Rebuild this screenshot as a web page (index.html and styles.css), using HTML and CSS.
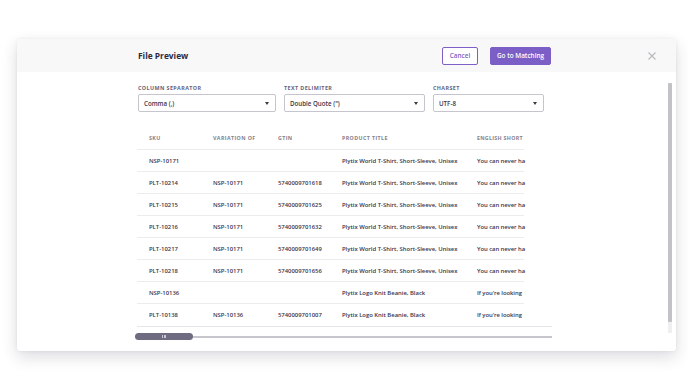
FILE: index.html
```html
<!DOCTYPE html>
<html>
<head>
<meta charset="utf-8">
<link rel="stylesheet" href="styles.css">
</head>
<body>
<div class="modal">
  <div class="modal-head">
    <h1 class="title">File Preview</h1>
    <div class="actions">
      <button class="btn btn-outline">Cancel</button>
      <button class="btn btn-primary">Go to Matching</button>
    </div>
    <svg class="close" width="8" height="8" viewBox="0 0 8 8"><path d="M0.5 0.5L7.5 7.5M7.5 0.5L0.5 7.5" stroke="#b9b9bf" stroke-width="1.1"/></svg>
  </div>
  <div class="modal-body">
    <div class="content">
      <div class="fields">
        <div class="field f1">
          <div class="label">Column Separator</div>
          <div class="select"><span>Comma (,)</span><i class="caret"></i></div>
        </div>
        <div class="field f2">
          <div class="label">Text Delimiter</div>
          <div class="select"><span>Double Quote (")</span><i class="caret"></i></div>
        </div>
        <div class="field f3">
          <div class="label">Charset</div>
          <div class="select"><span>UTF-8</span><i class="caret"></i></div>
        </div>
      </div>
      <div class="table-wrap">
        <div class="table">
          <div class="row head">
            <div class="c c1">SKU</div><div class="c c2">Variation of</div><div class="c c3">GTIN</div><div class="c c4">Product Title</div><div class="c c5">English Short</div>
          </div>
          <div class="row"><div class="c c1">NSP-10171</div><div class="c c2"></div><div class="c c3"></div><div class="c c4">Plytix World T-Shirt, Short-Sleeve, Unisex</div><div class="c c5">You can never ha</div></div>
          <div class="row"><div class="c c1">PLT-10214</div><div class="c c2">NSP-10171</div><div class="c c3">5740009701618</div><div class="c c4">Plytix World T-Shirt, Short-Sleeve, Unisex</div><div class="c c5">You can never ha</div></div>
          <div class="row"><div class="c c1">PLT-10215</div><div class="c c2">NSP-10171</div><div class="c c3">5740009701625</div><div class="c c4">Plytix World T-Shirt, Short-Sleeve, Unisex</div><div class="c c5">You can never ha</div></div>
          <div class="row"><div class="c c1">PLT-10216</div><div class="c c2">NSP-10171</div><div class="c c3">5740009701632</div><div class="c c4">Plytix World T-Shirt, Short-Sleeve, Unisex</div><div class="c c5">You can never ha</div></div>
          <div class="row"><div class="c c1">PLT-10217</div><div class="c c2">NSP-10171</div><div class="c c3">5740009701649</div><div class="c c4">Plytix World T-Shirt, Short-Sleeve, Unisex</div><div class="c c5">You can never ha</div></div>
          <div class="row"><div class="c c1">PLT-10218</div><div class="c c2">NSP-10171</div><div class="c c3">5740009701656</div><div class="c c4">Plytix World T-Shirt, Short-Sleeve, Unisex</div><div class="c c5">You can never ha</div></div>
          <div class="row"><div class="c c1">NSP-10136</div><div class="c c2"></div><div class="c c3"></div><div class="c c4">Plytix Logo Knit Beanie, Black</div><div class="c c5">If you're looking</div></div>
          <div class="row"><div class="c c1">PLT-10138</div><div class="c c2">NSP-10136</div><div class="c c3">5740009701007</div><div class="c c4">Plytix Logo Knit Beanie, Black</div><div class="c c5">If you're looking</div></div>
        </div>
      </div>
      <div class="hscroll">
        <div class="hthumb"><span class="grip"></span><span class="grip"></span><span class="grip"></span></div>
        <div class="htrack"></div>
      </div>
    </div>
    <div class="vscroll"><div class="vthumb"></div></div>
  </div>
</div>
</body>
</html>
```

FILE: styles.css
```css
* { box-sizing: border-box; }
html, body { margin: 0; padding: 0; background: #fff; }
body {
  font-family: "Open Sans", "Liberation Sans", sans-serif;
  color: #38344d;
  width: 688px;
  height: 387px;
  overflow: hidden;
}
.modal {
  margin: 39px 0 0 17px;
  width: 659px;
  height: 312px;
  background: #fff;
  border-radius: 3px;
  box-shadow: 0 6px 16px rgba(40, 36, 60, 0.16), 0 0 4px rgba(40, 36, 60, 0.06);
  display: flex;
  flex-direction: column;
  overflow: hidden;
}
.modal-head {
  height: 33px;
  flex: none;
  background: #f8f8f9;
  display: flex;
  align-items: center;
  padding-left: 121px;
  position: relative;
}
.title {
  margin: 0;
  font-size: 8.4px;
  font-weight: 700;
  color: #2c2940;
  flex: 1;
  transform: scaleY(1.12);
}
.actions {
  display: flex;
  gap: 12px;
  margin-right: 125px;
}
.btn {
  height: 18px;
  font-family: inherit;
  font-size: 6.4px;
  font-weight: 600;
  border-radius: 2px;
  padding: 0;
  cursor: pointer;
}
.btn-outline {
  width: 36px;
  background: #fff;
  border: 1px solid #7d5fc6;
  color: #7d5fc6;
}
.btn-primary {
  width: 61px;
  background: #7b5ec6;
  border: 1px solid #7b5ec6;
  color: #fff;
}
.close {
  position: absolute;
  left: 631px;
  top: 13px;
}
.modal-body {
  flex: 1;
  display: flex;
  position: relative;
}
.content {
  flex: 1;
  padding: 13px 0 0 121px;
}
.fields {
  display: flex;
  gap: 8px;
}
.label {
  font-size: 5.4px;
  font-weight: 700;
  letter-spacing: 0.4px;
  text-transform: uppercase;
  color: #66637a;
  height: 9px;
  line-height: 6px;
}
.select {
  height: 18px;
  border: 1px solid #c6c5cd;
  border-radius: 2px;
  display: flex;
  align-items: center;
  justify-content: space-between;
  padding: 0 6px 0 5px;
  font-size: 6.2px;
  font-weight: 600;
  color: #38344d;
}
.f1 .select { width: 138px; }
.f2 .select { width: 141px; }
.f3 .select { width: 111px; }
.caret {
  width: 0;
  height: 0;
  border-left: 2.5px solid transparent;
  border-right: 2.5px solid transparent;
  border-top: 3.5px solid #3a3a44;
}
.table-wrap {
  margin-top: 15px;
  margin-left: -1px;
  width: 415px;
  border-bottom: 1px solid #e6e6ea;
}
.table {
  width: 387px;
}
.row {
  display: flex;
  height: 22px;
  align-items: center;
  border-bottom: 1px solid #ececef;
  white-space: nowrap;
  font-size: 5.9px;
  font-weight: 600;
  color: #38344d;
}
.row:last-child { border-bottom: none; }
.row.head {
  height: 23px;
  font-size: 5.3px;
  font-weight: 700;
  letter-spacing: 0.4px;
  text-transform: uppercase;
  color: #84828f;
}
.c { flex: none; }
.c1 { width: 76px; padding-left: 12px; }
.c2 { width: 65px; }
.c3 { width: 64px; }
.c4 { width: 135px; }
.c5 { width: 47px; letter-spacing: -0.05px; }
.row.head .c5 { letter-spacing: 0.3px; }
.hscroll {
  display: flex;
  align-items: center;
  margin-top: 6px;
  margin-left: -3px;
  width: 417px;
}
.hthumb {
  width: 58px;
  height: 7px;
  border-radius: 4px;
  background: #6f6b80;
  display: flex;
  justify-content: center;
  align-items: center;
  gap: 1px;
}
.grip {
  width: 0.6px;
  height: 3px;
  background: #c9c7d2;
}
.htrack {
  flex: 1;
  height: 2px;
  background: #c7c6cc;
}
.vscroll {
  position: absolute;
  left: 651px;
  top: 11px;
  width: 4px;
  height: 250px;
  background: #efeff1;
}
.vthumb {
  height: 239px;
  background: #c3c2c7;
  border-radius: 1px;
}
```
